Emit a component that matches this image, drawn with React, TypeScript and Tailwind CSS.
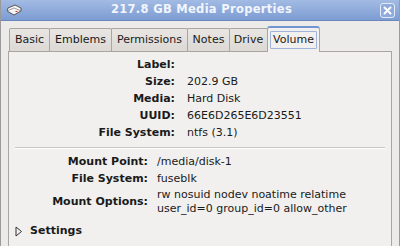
import React from 'react';

const tabs: [string, string][] = [
  ['Basic', 'w-[41px]'],
  ['Emblems', 'w-[63px]'],
  ['Permissions', 'w-[77px]'],
  ['Notes', 'w-[43px]'],
  ['Drive', 'w-[39px]'],
];

const volumeRows: [string, string][] = [
  ['Label:', ''],
  ['Size:', '202.9 GB'],
  ['Media:', 'Hard Disk'],
  ['UUID:', '66E6D265E6D23551'],
  ['File System:', 'ntfs (3.1)'],
];

const DiskIcon: React.FC = () => (
  <svg width="16" height="12" viewBox="0 0 16 12">
    <path d="M2 4 L9 1 L15 4 L15 7 L8 11 L1 7 Z" fill="#f4f4f4" stroke="#555" strokeWidth="1" />
    <path d="M1 7 L8 4 L15 7" fill="none" stroke="#888" strokeWidth="0.8" />
    <rect x="9.5" y="7" width="2" height="1" fill="#c33" />
  </svg>
);

function App() {
  return (
    <div
      className="w-[400px] h-[246px] overflow-hidden bg-[#edebe9] text-[#1a1a1a] border-x border-[#9a9a9a]"
      style={{ fontFamily: '"DejaVu Sans", sans-serif' }}
    >
      {/* title bar */}
      <div className="h-[21px] flex items-center px-[4px] bg-gradient-to-b from-[#a2bbe4] to-[#7d9cd2] border-b border-[#6a88bb]">
        <div className="w-[18px] flex items-center justify-center">
          <DiskIcon />
        </div>
        <div className="flex-1 text-center text-[11.5px] font-bold text-[#f2f5fb] tracking-[0.3px]">
          217.8 GB Media Properties
        </div>
        <div className="w-[15px] h-[15px] rounded-[3px] border border-[#e3ebf8] bg-[#8eabdb] flex items-center justify-center">
          <svg width="9" height="9" viewBox="0 0 9 9">
            <path d="M1.5 1.5 L7.5 7.5 M7.5 1.5 L1.5 7.5" stroke="#fff" strokeWidth="2" strokeLinecap="round" />
          </svg>
        </div>
      </div>

      <div className="px-[7px] pt-[3px] text-[11px]">
        {/* tabs */}
        <div className="flex items-end h-[27px] pl-[1px]">
          {tabs.map(([t, w]) => (
            <div
              key={t}
              className={`${w} h-[23px] flex items-center justify-center border border-b-0 border-[#a9a6a1] -ml-[1px] first:ml-0 rounded-t-[2px] bg-gradient-to-b from-[#e8e6e3] to-[#dcd9d5] text-[#1a1a1a]`}
            >
              {t}
            </div>
          ))}
          <div className="w-[53px] h-[26px] -ml-[1px] pt-[2px] flex justify-center items-start border border-b-0 border-[#a9a6a1] border-t-2 border-t-[#7395cf] rounded-t-[3px] bg-[#f1f0ee] relative z-10 -mb-[1px]">
            <span className="px-[2px] leading-[16px] border border-[#9fb4d8] rounded-[1px] mt-[1px]">Volume</span>
          </div>
        </div>

        {/* panel */}
        <div className="h-[200px] border border-[#a9a6a1] bg-[#f1f0ee] pt-[5px]">
          {volumeRows.map(([k, v]) => (
            <div key={k} className="flex h-[17px] items-center">
              <div className="w-[166px] text-right font-bold">{k}</div>
              <div className="ml-[12px]">{v}</div>
            </div>
          ))}

          <div className="mx-[6px] mt-[5px] h-[2px] border-t border-[#c9c6c1] border-b border-b-[#ffffff]" />

          <div className="mt-[5px]">
            <div className="flex h-[17px] items-center">
              <div className="w-[139px] text-right font-bold">Mount Point:</div>
              <div className="ml-[9px]">/media/disk-1</div>
            </div>
            <div className="flex h-[17px] items-center">
              <div className="w-[139px] text-right font-bold">File System:</div>
              <div className="ml-[9px]">fuseblk</div>
            </div>
            <div className="flex items-center">
              <div className="w-[139px] text-right font-bold">Mount Options:</div>
              <div className="ml-[9px] leading-[14px]">
                <div>rw nosuid nodev noatime relatime</div>
                <div>user_id=0 group_id=0 allow_other</div>
              </div>
            </div>
          </div>

          <div className="flex items-center mt-[7px] pl-[6px]">
            <svg width="8" height="11" viewBox="0 0 8 11" className="mr-[7px]">
              <path d="M1 1 L6.5 5.5 L1 10 Z" fill="none" stroke="#333" strokeWidth="1" strokeLinejoin="round" />
            </svg>
            <span className="font-bold">Settings</span>
          </div>
        </div>
      </div>
    </div>
  );
}

export default App;
